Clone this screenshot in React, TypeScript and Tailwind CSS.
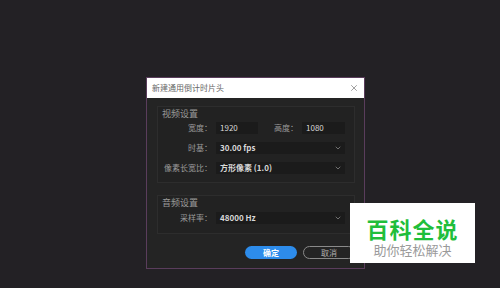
import { ChevronDown, X } from "lucide-react";

const font = { fontFamily: '"Noto Sans CJK SC", "Noto Sans", sans-serif' };

function Field({ value, width = "w-[42px]" }: { value: string; width?: string }) {
	return (
		<div className={`${width} h-[12px] bg-[#1b1b1b] flex items-center pl-[4px] text-[8px] leading-none text-[#d8d8d8]`}>
			{value}
		</div>
	);
}

function Select({ value }: { value: string }) {
	return (
		<div className="w-[129px] h-[12px] bg-[#1b1b1b] flex items-center justify-between pl-[4px] pr-[3px] text-[8px] leading-none text-[#d8d8d8] font-bold">
			<span>{value}</span>
			<ChevronDown className="w-[8px] h-[8px] text-[#9a9a9a]" strokeWidth={2} />
		</div>
	);
}

function Label({ text, width = "w-[54px]" }: { text: string; width?: string }) {
	return (
		<div className={`${width} text-right whitespace-nowrap text-[8px] leading-none text-[#9a9a9a]`}>{text}</div>
	);
}

export default function App() {
	return (
		<div className="relative w-[500px] h-[288px] bg-[#232125] overflow-hidden" style={font}>
			<div className="pt-[77px] pl-[146px]">
				{/* Dialog */}
				<div className="w-[219px] h-[192px] border border-[#5a3d5c] bg-[#242424] flex flex-col">
					<div className="h-[20px] bg-white flex items-center justify-between pl-[5px] pr-[5px]">
						<span className="text-[8px] text-[#666] leading-none">新建通用倒计时片头</span>
						<X className="w-[10px] h-[10px] text-[#666]" strokeWidth={1.5} />
					</div>

					<div className="flex flex-col pl-[10px] pr-[9px] pt-[8px]">
						{/* Video settings */}
						<div className="border border-[#2d2d2d] bg-[#222222] pb-[8px]">
							<div className="h-[12px] flex items-center pl-[4px] text-[9px] leading-none text-[#9a9a9a]">视频设置</div>
							<div className="mt-[3px] flex flex-col gap-[8px]">
								<div className="flex items-center gap-[4px]">
									<Label text="宽度：" />
									<Field value="1920" />
									<Label text="高度：" width="w-[36px]" />
									<Field value="1080" width="w-[43px]" />
								</div>
								<div className="flex items-center gap-[4px]">
									<Label text="时基：" />
									<Select value="30.00 fps" />
								</div>
								<div className="flex items-center gap-[4px]">
									<Label text="像素长宽比：" />
									<Select value="方形像素 (1.0)" />
								</div>
							</div>
						</div>

						{/* Audio settings */}
						<div className="mt-[12px] border border-[#2d2d2d] bg-[#222222] pb-[9px]">
							<div className="h-[12px] flex items-center pl-[4px] text-[9px] leading-none text-[#9a9a9a]">音频设置</div>
							<div className="mt-[4px] flex items-center gap-[4px]">
								<Label text="采样率：" />
								<Select value="48000 Hz" />
							</div>
						</div>

						<div className="mt-[12px] flex justify-end gap-[6px]">
							<div className="w-[52px] h-[13px] rounded-full bg-[#2d8ceb] flex items-center justify-center text-[8px] leading-none text-white font-bold">
								确定
							</div>
							<div className="w-[52px] h-[13px] rounded-full border border-[#8a8a8a] flex items-center justify-center text-[8px] leading-none text-[#b0b0b0]">
								取消
							</div>
						</div>
					</div>
				</div>
			</div>

			{/* Watermark */}
			<div className="absolute left-[350px] top-[203px] w-[125px] h-[60px] bg-white flex flex-col items-center pt-[13px]">
				<div className="h-[24px] text-[22px] leading-[24px] font-bold text-[#1fbe3b] tracking-[1px]">百科全说</div>
				<div className="mt-[2px] h-[15px] text-[13px] leading-[15px] text-[#9a9a9a]">助你轻松解决</div>
			</div>
		</div>
	);
}
